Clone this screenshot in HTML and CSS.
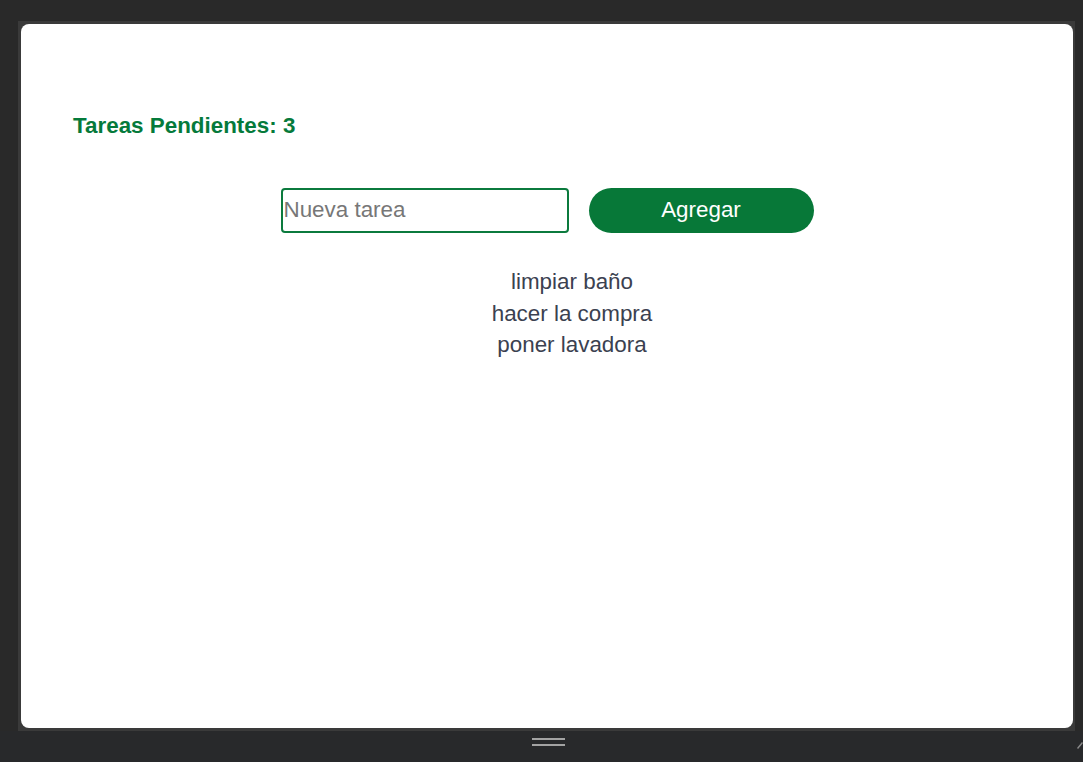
FILE: index.html
```html
<!DOCTYPE html>
<html lang="es">
<head>
<meta charset="utf-8">
<title>Tareas</title>
<link rel="stylesheet" href="styles.css">
</head>
<body>
<div class="frame">
  <main class="panel">
    <h2 class="count">Tareas Pendientes: 3</h2>
    <form class="add-row">
      <input class="task-input" type="text" placeholder="Nueva tarea">
      <button class="add-btn" type="button">Agregar</button>
    </form>
    <ul class="tasks">
      <li>limpiar baño</li>
      <li>hacer la compra</li>
      <li>poner lavadora</li>
    </ul>
  </main>
</div>
<div class="bottom-bar">
  <div class="handle"><span></span><span></span></div>
  <svg class="grip" width="6" height="8" viewBox="0 0 6 8"><path d="M0.5 7.5 L5.5 1.5" stroke="#8a8a8a" stroke-width="1.5"/></svg>
</div>
</body>
</html>
```
FILE: styles.css
```css
html, body {
  margin: 0;
  padding: 0;
  background: #292929;
  height: 762px;
  overflow: hidden;
  font-family: "Liberation Sans", Arial, sans-serif;
}
.frame {
  margin: 21px 0 0 18px;
  width: 1057px;
  height: 710px;
  box-sizing: border-box;
  padding: 3px 2px 3px 3px;
  background: #3a3a3a;
}
.panel {
  height: 100%;
  background: #ffffff;
  border-radius: 8px;
  box-sizing: border-box;
  padding: 89px 0 0 0;
  display: flex;
  flex-direction: column;
}
.count {
  margin: 0 0 0 52px;
  font-size: 22.4px;
  font-weight: bold;
  color: #057a3b;
  line-height: 26px;
}
.add-row {
  margin: 49px 0 0 0;
  display: flex;
  justify-content: center;
  align-items: center;
  gap: 20px;
}
.task-input {
  width: 288px;
  height: 45px;
  box-sizing: border-box;
  border: 2px solid #0b7a3d;
  border-radius: 4px;
  padding: 0 2px 2px 1px;
  font-family: "Liberation Sans", Arial, sans-serif;
  font-size: 22.4px;
  color: #333;
  outline: none;
  background: #fff;
}
.task-input::placeholder {
  color: #777777;
}
.add-btn {
  width: 225px;
  height: 45px;
  border: none;
  border-radius: 23px;
  background: #077838;
  color: #ffffff;
  font-family: "Liberation Sans", Arial, sans-serif;
  font-size: 22.4px;
  padding: 0 0 2px 0;
}
.tasks {
  list-style: none;
  margin: 33px 0 0 0;
  padding: 0 0 0 50px;
  text-align: center;
  font-size: 22.4px;
  line-height: 31.5px;
  color: #3b4150;
}
.bottom-bar {
  position: relative;
  height: 31px;
  background: #28292b;
}
.handle {
  position: absolute;
  left: 532px;
  top: 7px;
  width: 33px;
  display: flex;
  flex-direction: column;
  gap: 4px;
}
.handle span {
  display: block;
  height: 2px;
  background: #a3a3a3;
}
.grip {
  position: absolute;
  right: 0;
  top: 10px;
}
```
